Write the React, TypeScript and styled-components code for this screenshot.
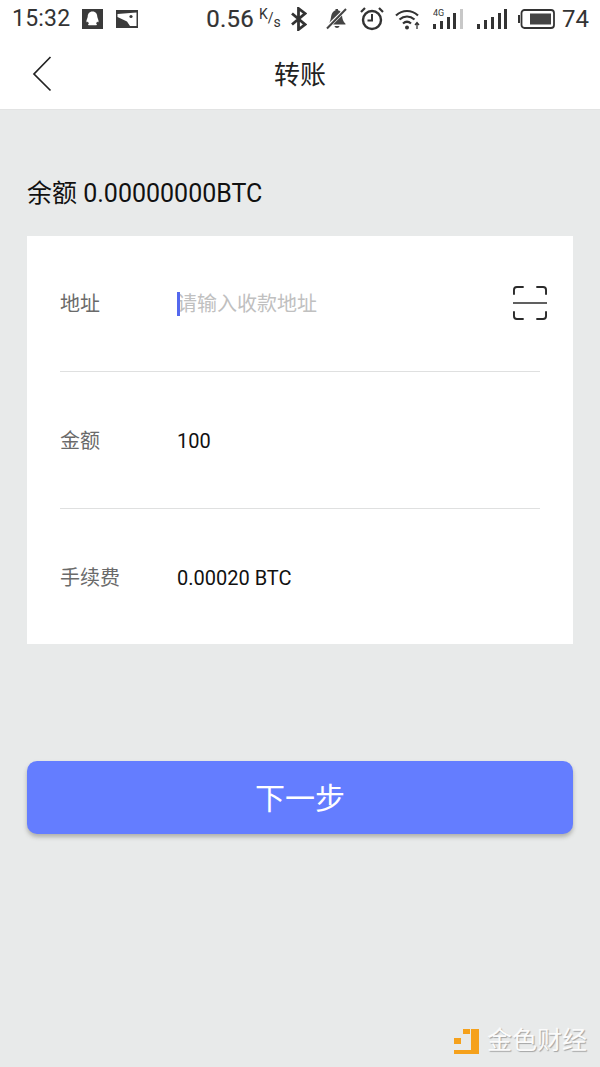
import React from "react";
import styled, { createGlobalStyle } from "styled-components";

const Global = createGlobalStyle`
  html, body { margin: 0; padding: 0; background: #e8eaea; }
  * { box-sizing: border-box; }
`;
const FONT = `Roboto, "Noto Sans CJK SC", sans-serif`;

const Page = styled.div`
  position: relative;
  width: 600px;
  height: 1067px;
  overflow: hidden;
  background: #e8eaea;
  font-family: ${FONT};
  display: flex;
  flex-direction: column;
`;
const StatusBar = styled.div`
  height: 38px;
  background: #fff;
  display: flex;
  align-items: center;
  padding: 0 12px;
  color: #333;
`;
const StatusText = styled.span<{ $size?: number; $ml?: number }>`
  font-size: ${(p) => p.$size ?? 23}px;
  margin-left: ${(p) => p.$ml ?? 0}px;
  line-height: 38px;
  letter-spacing: 0.2px;
  white-space: nowrap;
`;
const SpeedValue = styled(StatusText)`
  font-size: 24px;
  -webkit-text-stroke: 0.2px #333;
`;
const SpeedUnit = styled.span`
  display: flex;
  align-items: center;
  width: 21px;
  margin-left: 5px;
  margin-right: 10px;
  color: #333;
  white-space: nowrap;
`;
const UnitPart = styled.span<{ $dy: number }>`
  font-size: 14px;
  line-height: 14px;
  transform: translateY(${(p) => p.$dy}px);
`;
const StatusIcon = styled.svg<{ $ml?: number }>`
  display: block;
  flex: none;
  margin-left: ${(p) => p.$ml ?? 0}px;
`;
const NavBar = styled.div`
  position: relative;
  height: 72px;
  background: #fff;
  display: flex;
  align-items: center;
  justify-content: center;
  border-bottom: 1px solid #e2e3e3;
`;
const BackIcon = styled.svg`
  position: absolute;
  left: 32px;
  top: 18px;
`;
const Title = styled.div`
  font-size: 26px;
  color: #222;
  margin-top: -2px;
`;
const Balance = styled.div`
  margin: 69px 0 0 27px;
  height: 30px;
  line-height: 30px;
  font-size: 25px;
  color: #111;
`;
const Card = styled.div`
  margin: 27px 27px 0;
  width: 546px;
  height: 408px;
  background: #fff;
  padding: 0 33px;
  display: flex;
  flex-direction: column;
`;
const Row = styled.div<{ $line?: boolean; $h: number; $pt: number }>`
  height: ${(p) => p.$h}px;
  display: flex;
  align-items: flex-start;
  padding-top: ${(p) => p.$pt}px;
  border-bottom: ${(p) => (p.$line ? "1px solid #dfe0e0" : "none")};
  position: relative;
`;
const Label = styled.div`
  width: 117px;
  font-size: 20px;
  line-height: 30px;
  color: #6a6a6a;
`;
const Value = styled.div`
  font-size: 20px;
  line-height: 30px;
  color: #111;
`;
const Placeholder = styled.div`
  font-size: 20px;
  line-height: 30px;
  color: #c0c0c0;
  position: relative;
`;
const Caret = styled.span`
  position: absolute;
  left: 0;
  top: 3px;
  width: 3px;
  height: 24px;
  background: #5468ee;
`;
const ScanIcon = styled.svg`
  position: absolute;
  right: -7px;
  top: 50px;
`;
const NextButton = styled.button`
  margin: 117px 27px 0;
  width: 546px;
  height: 73px;
  border: none;
  border-radius: 10px;
  background: #647dff;
  color: #fff;
  font-family: ${FONT};
  font-size: 30px;
  padding: 0 0 4px;
  box-shadow: 0 3px 4px rgba(90, 90, 80, 0.4);
`;
const Watermark = styled.div`
  position: absolute;
  right: 13px;
  top: 1027px;
  display: flex;
  align-items: center;
  gap: 8px;
`;
const WatermarkText = styled.span`
  font-size: 25px;
  line-height: 28px;
  color: #fbfbfb;
  text-shadow: 1px 1px 1px rgba(0, 0, 0, 0.3);
`;

export default function App() {
  return (
    <Page>
      <Global />
      <StatusBar>
        <StatusText>15:32</StatusText>
        <StatusIcon $ml={12} width="21" height="20" viewBox="0 0 21 20">
          <rect width="21" height="20" fill="#3a3a3a" />
          <path d="M10.500 2.500c3.300 0 4.800 2.600 4.800 5.200 0 1.300 1.700 3.500 1.200 5.200-.3.700-1.100-.2-1.400-.5-.3 1.100-.8 1.800-1.100 2.100.9.300 1.300 1 .4 1.700H6.600c-.9-.7-.5-1.400.4-1.700-.3-.3-.8-1-1.100-2.100-.3.300-1.100 1.200-1.400.5-.5-1.700 1.200-3.900 1.200-5.200 0-2.600 1.500-5.200 4.800-5.200z" fill="#fff" />
        </StatusIcon>
        <StatusIcon $ml={13} width="22" height="18" viewBox="0 0 22 18">
          <rect width="22" height="18" fill="#3a3a3a" />
          <path d="M1.500 4L20.500 2.500V16H14L11 11.500 1.500 7z" fill="#fff" />
          <circle cx="15" cy="6.500" r="1.600" fill="#3a3a3a" />
        </StatusIcon>
        <SpeedValue $ml={68}>0.56</SpeedValue>
        <SpeedUnit>
          <UnitPart $dy={-5}>K</UnitPart>
          <UnitPart $dy={-1}>/</UnitPart>
          <UnitPart $dy={3}>s</UnitPart>
        </SpeedUnit>
        <StatusIcon width="17" height="24" viewBox="0 0 17 24">
          <path d="M2 6.500l13 11-6.500 5V1.500l6.500 5-13 11" fill="none" stroke="#333" strokeWidth="2.800" />
        </StatusIcon>
        <StatusIcon $ml={19} width="21" height="24" viewBox="0 0 21 24">
          <path d="M3 16c1.500-2 1.800-4.500 2.200-7C5.700 6 7.500 3.800 9.500 3.200V2h2.500v1.200c1 .3 1.900.8 2.600 1.500zM7 17.500l9-9c.4 3.500 1 6 3.500 8.200v.8z" fill="#444" />
          <path d="M8.500 19h5c-.4 2.500-4.600 2.500-5 0z" fill="#444" />
          <path d="M1 21.500L20 2" stroke="#444" strokeWidth="2" />
        </StatusIcon>
        <StatusIcon $ml={13} width="24" height="26" viewBox="0 0 24 26">
          <circle cx="12" cy="14" r="9" fill="none" stroke="#333" strokeWidth="2.400" />
          <path d="M12 8v6.500H7.500" fill="none" stroke="#333" strokeWidth="2" />
          <path d="M1 6l4-4M23 6l-4-4" stroke="#333" strokeWidth="2.200" />
        </StatusIcon>
        <StatusIcon $ml={11} width="26" height="22" viewBox="0 0 26 22">
          <path d="M1 7.500c6.500-6 15.500-6 22 0M4.500 11.500c4.500-4 10.500-4 15 0M8 15.500c2.500-2.200 5.500-2.200 8 0" fill="none" stroke="#333" strokeWidth="2.200" />
          <circle cx="12" cy="19.500" r="2" fill="#333" />
          <path d="M22 21v-6M20 17l2-2.500 2 2.500" fill="none" stroke="#333" strokeWidth="1.300" />
        </StatusIcon>
        <StatusIcon $ml={12} width="30" height="22" viewBox="0 0 30 22">
          <text x="0" y="8" fontSize="9" fontFamily="Roboto, sans-serif" fill="#333">4G</text>
          <rect x="0" y="16" width="3" height="5" fill="#333" />
          <rect x="7" y="13" width="3" height="8" fill="#333" />
          <rect x="14" y="9" width="3" height="12" fill="#333" />
          <rect x="20" y="5" width="3" height="16" fill="#333" />
          <rect x="27" y="1" width="3" height="20" fill="#c8c8c8" />
        </StatusIcon>
        <StatusIcon $ml={14} width="31" height="20" viewBox="0 0 31 20">
          <rect x="0" y="15" width="3" height="5" fill="#333" />
          <rect x="7" y="11" width="3" height="9" fill="#333" />
          <rect x="14" y="8" width="3" height="12" fill="#333" />
          <rect x="21" y="4" width="3" height="16" fill="#333" />
          <rect x="27" y="0" width="3" height="20" fill="#333" />
        </StatusIcon>
        <StatusIcon $ml={10} width="37" height="20" viewBox="0 0 37 20">
          <rect x="3.500" y="1" width="32.500" height="18" rx="3" fill="none" stroke="#333" strokeWidth="1.800" />
          <rect x="0" y="6" width="2" height="8" fill="#333" />
          <rect x="12" y="4.500" width="21" height="11" fill="#444" />
        </StatusIcon>
        <StatusText $ml={7} $size={24}>74</StatusText>
      </StatusBar>
      <NavBar>
        <BackIcon width="20" height="36" viewBox="0 0 20 36">
          <path d="M18.500 1L2 18l16.500 16.500" fill="none" stroke="#222" strokeWidth="1.700" />
        </BackIcon>
        <Title>转账</Title>
      </NavBar>
      <Balance>余额 0.00000000BTC</Balance>
      <Card>
        <Row $line $h={136} $pt={53}>
          <Label>地址</Label>
          <Placeholder>
            请输入收款地址
            <Caret />
          </Placeholder>
          <ScanIcon width="34" height="34" viewBox="0 0 35 35">
            <path
              d="M1 9V4a3 3 0 0 1 3-3h7M24 1h7a3 3 0 0 1 3 3v5M1 26v5a3 3 0 0 0 3 3h7M24 34h7a3 3 0 0 0 3-3v-5"
              fill="none"
              stroke="#2b2b2b"
              strokeWidth="2"
            />
            <path d="M0 17.500h35" stroke="#2b2b2b" strokeWidth="1.300" />
          </ScanIcon>
        </Row>
        <Row $line $h={137} $pt={54}>
          <Label>金额</Label>
          <Value>100</Value>
        </Row>
        <Row $h={135} $pt={54}>
          <Label>手续费</Label>
          <Value>0.00020 BTC</Value>
        </Row>
      </Card>
      <NextButton>下一步</NextButton>
      <Watermark>
        <svg width="25" height="25" viewBox="0 0 25 25">
          <path d="M9 0h7v5H9zM0 9h7v6H0zM17 0h8v25H0v-4h17z" fill="#f5a11c" />
        </svg>
        <WatermarkText>金色财经</WatermarkText>
      </Watermark>
    </Page>
  );
}
